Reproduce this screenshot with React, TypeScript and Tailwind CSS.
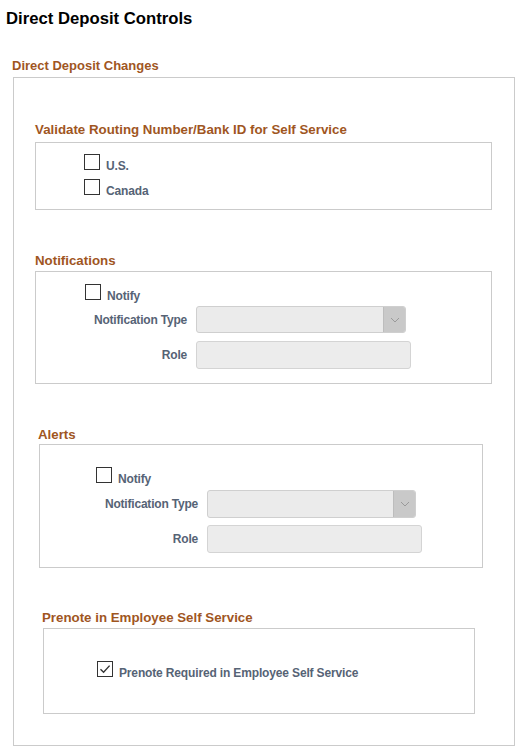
import React from "react";

const font = { fontFamily: '"Liberation Sans", Arial, sans-serif' };

const Heading: React.FC<{ className?: string; children: React.ReactNode }> = ({ className = "", children }) => (
  <div className={`leading-[16px] font-bold text-[#a0561f] whitespace-nowrap ${className}`}>{children}</div>
);

const CheckBox: React.FC<{ checked?: boolean }> = ({ checked }) => (
  <span className="flex h-[16px] w-[16px] shrink-0 items-center justify-center border border-[#333] bg-white">
    {checked && (
      <svg width="12" height="10" viewBox="0 0 12 10" fill="none">
        <path d="M1.5 5.2 L4.6 8.2 L10.6 1.6" stroke="#333" strokeWidth="1.4" />
      </svg>
    )}
  </span>
);

const CheckRow: React.FC<{ label: string; checked?: boolean; className?: string }> = ({ label, checked, className = "" }) => (
  <div className={`flex h-[16px] items-start gap-[6px] ${className}`}>
    <CheckBox checked={checked} />
    <span className="mt-[4px] text-[12px] leading-[16px] font-bold tracking-[-0.15px] text-[#566375] whitespace-nowrap">
      {label}
    </span>
  </div>
);

const Label: React.FC<{ width: string; children: React.ReactNode }> = ({ width, children }) => (
  <span className={`${width} shrink-0 text-right text-[12px] leading-[16px] font-bold tracking-[-0.2px] text-[#566375]`}>
    {children}
  </span>
);

const Dropdown: React.FC<{ width: string; height: string }> = ({ width, height }) => (
  <div className={`flex ${width} ${height} overflow-hidden rounded-[3px] border border-[#cfcfcf] bg-[#ebebeb]`}>
    <div className="flex-1" />
    <div className="flex w-[22px] items-center justify-center border-l border-[#bdbdbd] bg-[#c9c9c9]">
      <svg width="10" height="6" viewBox="0 0 10 6" fill="none">
        <path d="M1 1 L5 5 L9 1" stroke="#9a9a9a" strokeWidth="1" />
      </svg>
    </div>
  </div>
);

const TextBox: React.FC<{ width: string; height: string }> = ({ width, height }) => (
  <div className={`${width} ${height} rounded-[3px] border border-[#d4d4d4] bg-[#ececec]`} />
);

export default function App() {
  return (
    <div className="min-h-screen bg-white" style={font}>
      <h1 className="pl-[6px] pt-[9px] text-[16.7px] leading-[20px] font-bold text-black">Direct Deposit Controls</h1>

      <Heading className="mt-[29px] ml-[12px] text-[13px]">Direct Deposit Changes</Heading>

      <div className="mt-[3px] ml-[13px] w-[502px] border border-[#cbcbcb] pb-[31px]">
        {/* routing validation */}
        <Heading className="mt-[44px] ml-[21px] text-[13.3px]">Validate Routing Number/Bank ID for Self Service</Heading>
        <div className="mt-[4px] ml-[21px] w-[457px] border border-[#cbcbcb] pt-[11px] pb-[14px]">
          <div className="ml-[48px] flex flex-col gap-[9px]">
            <CheckRow label="U.S." />
            <CheckRow label="Canada" />
          </div>
        </div>

        {/* notifications */}
        <Heading className="mt-[43px] ml-[21px] text-[13.3px]">Notifications</Heading>
        <div className="mt-[2px] ml-[21px] w-[457px] border border-[#cbcbcb] pt-[12px] pb-[14px]">
          <CheckRow label="Notify" className="ml-[49px]" />
          <div className="mt-[6px] flex items-center gap-[9px]">
            <Label width="w-[151px]">Notification Type</Label>
            <Dropdown width="w-[210px]" height="h-[27px]" />
          </div>
          <div className="mt-[8px] flex items-center gap-[9px]">
            <Label width="w-[151px]">Role</Label>
            <TextBox width="w-[215px]" height="h-[28px]" />
          </div>
        </div>

        {/* alerts */}
        <Heading className="mt-[43px] ml-[24px] text-[13.3px]">Alerts</Heading>
        <div className="mt-[1px] ml-[25px] w-[444px] border border-[#cbcbcb] pt-[22px] pb-[14px]">
          <CheckRow label="Notify" className="ml-[56px]" />
          <div className="mt-[7px] flex items-center gap-[9px]">
            <Label width="w-[158px]">Notification Type</Label>
            <Dropdown width="w-[209px]" height="h-[28px]" />
          </div>
          <div className="mt-[7px] flex items-center gap-[9px]">
            <Label width="w-[158px]">Role</Label>
            <TextBox width="w-[215px]" height="h-[28px]" />
          </div>
        </div>

        {/* prenote */}
        <Heading className="mt-[42px] ml-[28px] text-[13.3px]">Prenote in Employee Self Service</Heading>
        <div className="mt-[2px] ml-[29px] w-[432px] border border-[#cbcbcb] pt-[32px] pb-[36px]">
          <CheckRow label="Prenote Required in Employee Self Service" checked className="ml-[53px]" />
        </div>
      </div>
    </div>
  );
}
